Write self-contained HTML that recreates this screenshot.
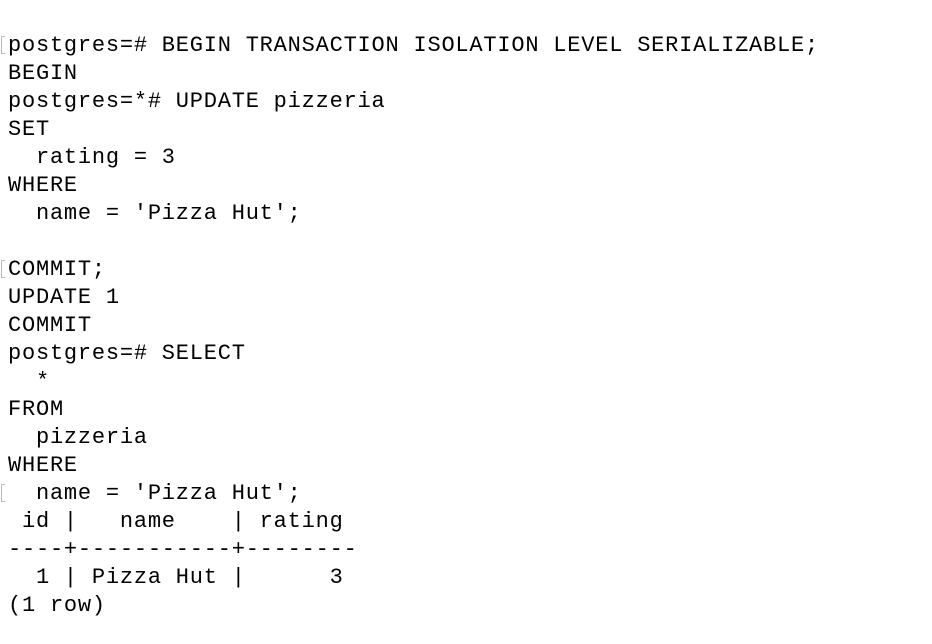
<!DOCTYPE html>
<html><head><meta charset="utf-8"><style>
html,body{margin:0;padding:0;background:#fff;width:932px;height:644px;overflow:hidden}
pre{position:absolute;left:8px;top:32px;margin:0;font-family:"Liberation Mono",monospace;font-size:22px;letter-spacing:0.78px;line-height:28px;color:#000}
.m{position:absolute;left:1px;width:4px;height:18px;border:1.5px solid #bbb;border-right:none;box-sizing:border-box}
</style></head><body>
<div class="m" style="top:36px"></div>
<div class="m" style="top:260px"></div>
<div class="m" style="top:484px"></div>
<pre>postgres=# BEGIN TRANSACTION ISOLATION LEVEL SERIALIZABLE;
BEGIN
postgres=*# UPDATE pizzeria
SET
  rating = 3
WHERE
  name = 'Pizza Hut';

COMMIT;
UPDATE 1
COMMIT
postgres=# SELECT
  *
FROM
  pizzeria
WHERE
  name = 'Pizza Hut';
 id |   name    | rating
----+-----------+--------
  1 | Pizza Hut |      3
(1 row)</pre>
</body></html>
